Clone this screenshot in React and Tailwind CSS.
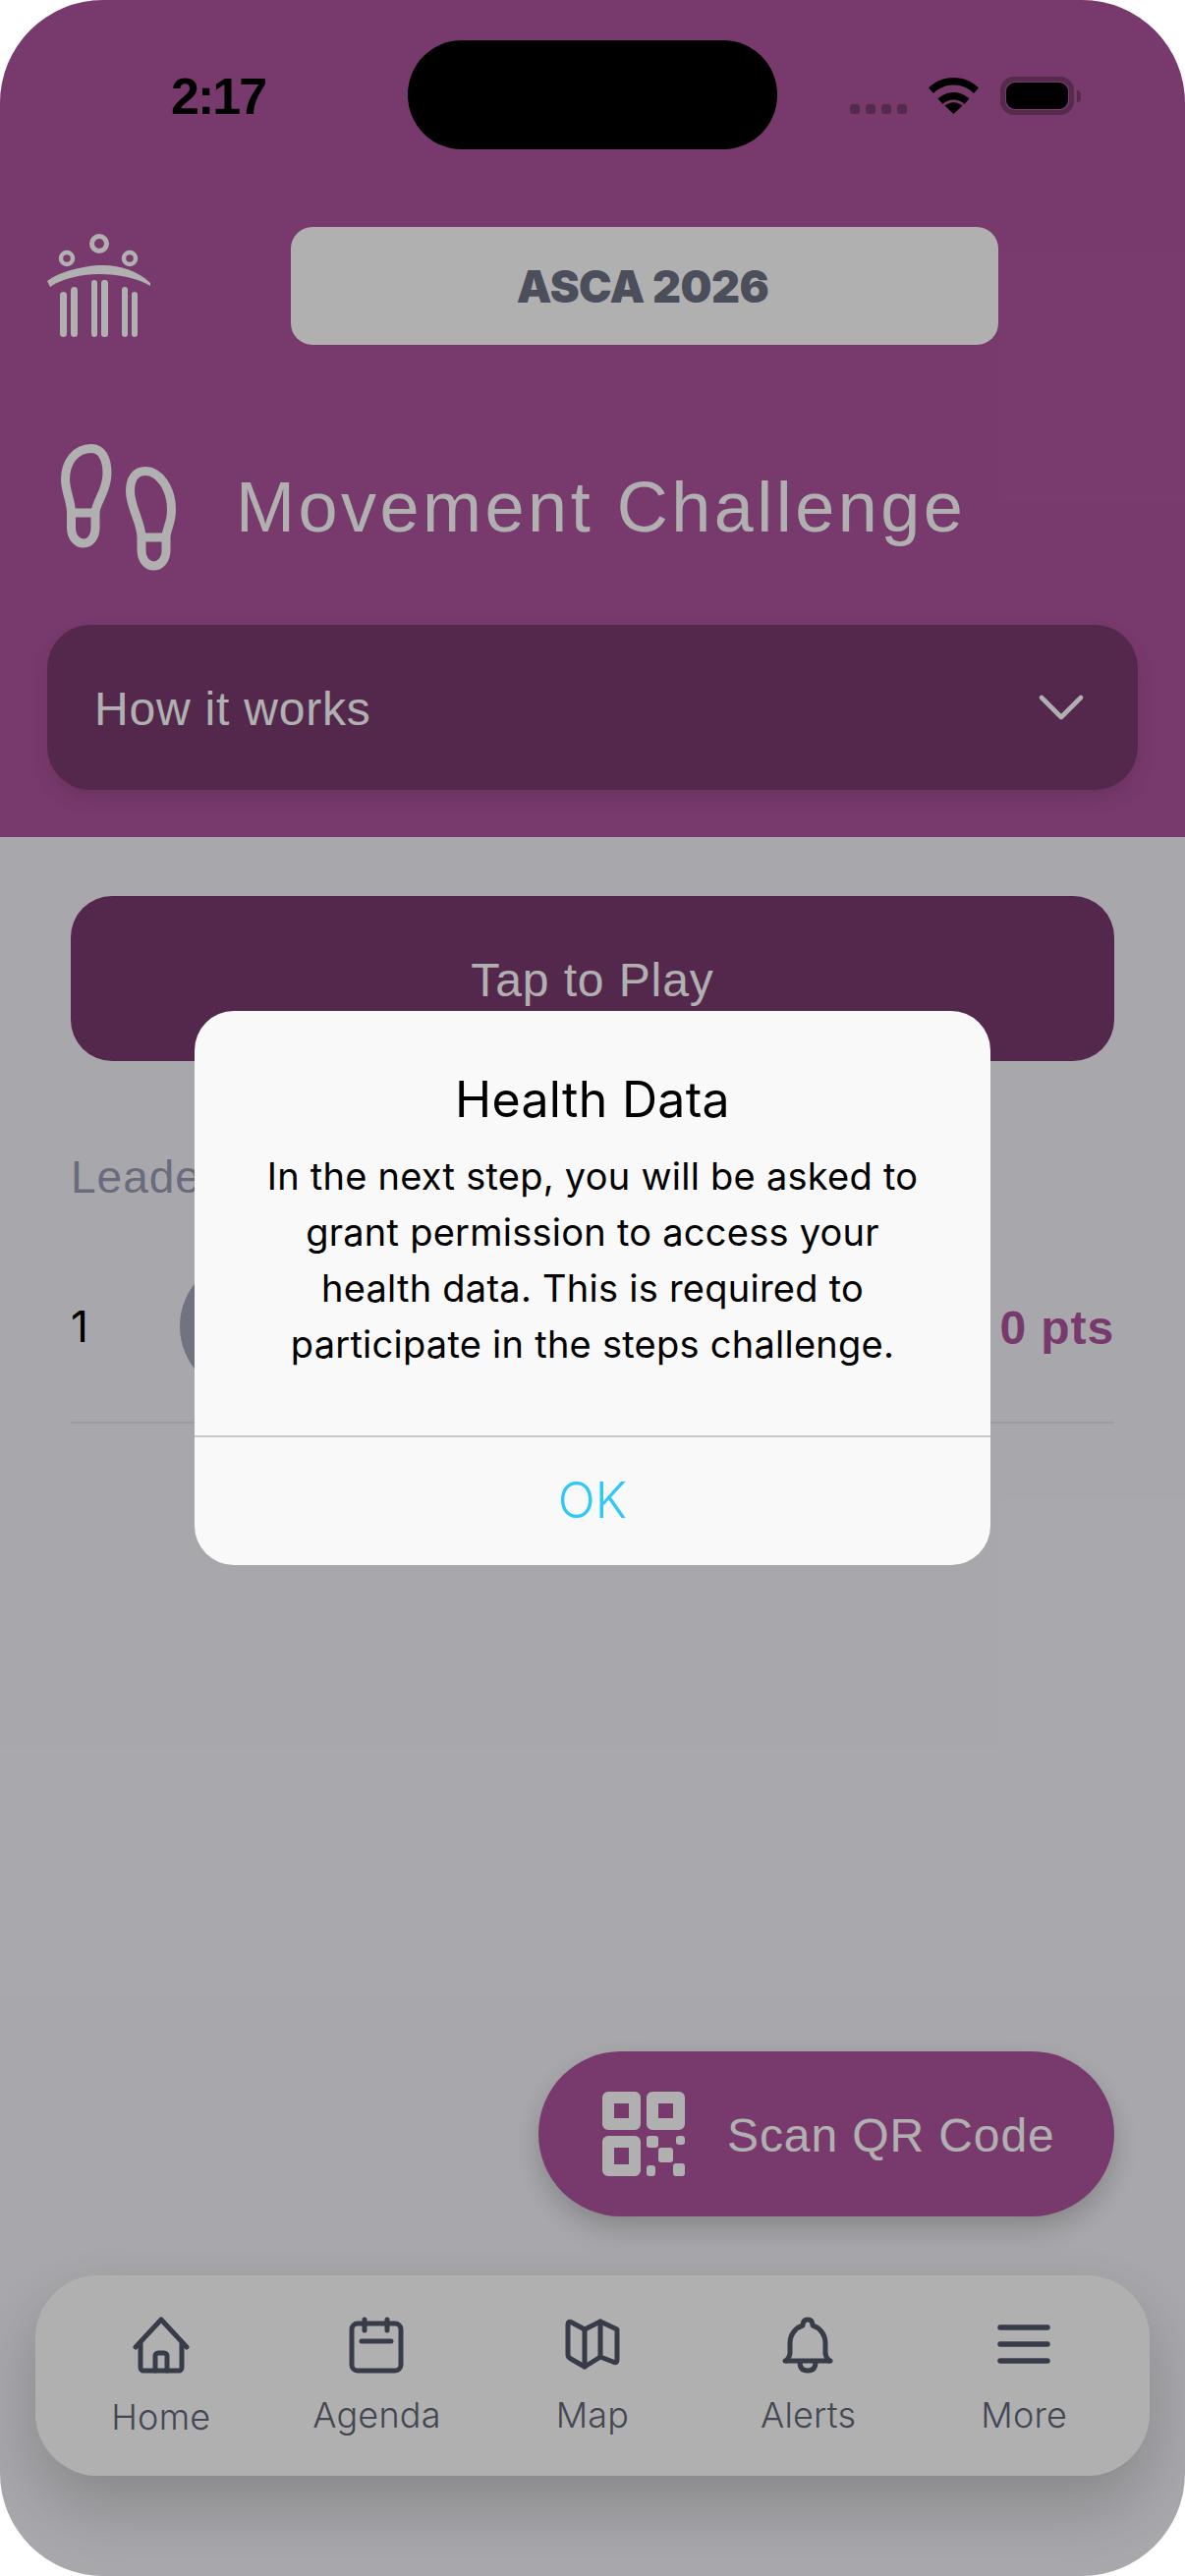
import React from 'react';
import { ChevronDown } from 'lucide-react';

const Footprints = () => (
  <svg width="118" height="130" viewBox="0 0 118 130" fill="none" stroke="currentColor" strokeWidth="9" className="shrink-0">
    <path d="M31 4.500C15 4.500 4.500 18 4.500 36c0 12 6 22 6 34v15c0 10 6 16 12.500 16s12-6 12-16V70c0-10 12-22 12-40C47 14 41 4.500 31 4.500Z" />
    <path d="M10 70h25" />
    <g transform="translate(66 23)">
      <path d="M20 4.500C10 4.500 4.500 12 4.500 25c0 16 11.500 32 11.500 47v13c0 10 6 16 12.500 16S41 95 41 85V72c0-8 5.500-14 5.500-28C46.500 22 34 4.500 20 4.500Z" />
      <path d="M16 72h25" />
    </g>
  </svg>
);

const Logo = () => (
  <svg width="106" height="106" viewBox="0 0 106 106" fill="currentColor" className="shrink-0">
    <circle cx="53" cy="10" r="7.5" fill="none" stroke="currentColor" strokeWidth="5" />
    <circle cx="20" cy="25" r="6" fill="none" stroke="currentColor" strokeWidth="4.500" />
    <circle cx="84" cy="25" r="6" fill="none" stroke="currentColor" strokeWidth="4.500" />
    <path d="M0 48C12 39 34 33 53 32c20-1 40 6 52 18v3C92 45 72 41 53 41 36 41 16 45 3 54Z" />
    <rect x="13" y="59" width="7" height="46" rx="3.500" />
    <rect x="24" y="54" width="7" height="51" rx="3.500" />
    <rect x="45" y="47" width="6" height="58" rx="3" />
    <rect x="55" y="47" width="7" height="58" rx="3" />
    <rect x="76" y="54" width="6" height="51" rx="3" />
    <rect x="86" y="59" width="6" height="46" rx="3" />
  </svg>
);

const QrIcon = () => (
  <svg width="84" height="86" viewBox="0 0 84 86" fill="currentColor" fillRule="evenodd" className="shrink-0">
    <path d="M6 0h27a6 6 0 0 1 6 6v27a6 6 0 0 1-6 6H6a6 6 0 0 1-6-6V6a6 6 0 0 1 6-6Zm6 12v15h15V12Z" />
    <path d="M51 0h27a6 6 0 0 1 6 6v27a6 6 0 0 1-6 6H51a6 6 0 0 1-6-6V6a6 6 0 0 1 6-6Zm6 12v15h15V12Z" />
    <path d="M6 45h27a6 6 0 0 1 6 6v29a6 6 0 0 1-6 6H6a6 6 0 0 1-6-6V51a6 6 0 0 1 6-6Zm6 12v17h15V57Z" />
    <rect x="45" y="45" width="12" height="12" rx="3" />
    <rect x="75" y="45" width="9" height="9" rx="3" />
    <rect x="57" y="57" width="15" height="15" rx="3" />
    <rect x="45" y="75" width="9" height="11" rx="3" />
    <rect x="72" y="73" width="12" height="13" rx="3" />
  </svg>
);

const HomeIcon = () => (
  <svg width="58" height="58" viewBox="0 0 58 58" fill="none" stroke="currentColor" strokeWidth="5" strokeLinecap="round" strokeLinejoin="round">
    <path d="M3 31 29 3l26 28" />
    <path d="M8 27v25a3 3 0 0 0 3 3h36a3 3 0 0 0 3-3V27" />
    <path d="M23 55V40a3 3 0 0 1 3-3h6a3 3 0 0 1 3 3v15" />
  </svg>
);

const CalendarIcon = () => (
  <svg width="56" height="58" viewBox="0 0 56 58" fill="none" stroke="currentColor" strokeWidth="5" strokeLinecap="round" strokeLinejoin="round">
    <rect x="3" y="7" width="50" height="48" rx="6" />
    <path d="M16 3v11M39 3v11M13 25h30" />
  </svg>
);

const MapIcon = () => (
  <svg width="56" height="52" viewBox="0 0 56 52" fill="none" stroke="currentColor" strokeWidth="5" strokeLinecap="round" strokeLinejoin="round" className="mt-[2px]">
    <path d="M3 6Q3 2 7 4l13 7 16-8 17 8v31q0 4-4 2l-13-5-16 10-14-8q-3-2-3-4Z" />
    <path d="M20 11v38M36 3v36" />
  </svg>
);

const BellIcon = () => (
  <svg width="52" height="58" viewBox="0 0 52 58" fill="none" stroke="currentColor" strokeWidth="5" strokeLinecap="round" strokeLinejoin="round" className="-ml-[2px]">
    <path d="M3 45h46" />
    <path d="M4 45c2-2 4-4 4-8V27c0-9 6-16 13-18 0-4 2-6 5-6s5 2 5 6c7 2 13 9 13 18v10c0 4 2 6 4 8" />
    <path d="M18 46c0 6 3 9 8 9s8-3 8-9" />
  </svg>
);

const MenuIcon = () => (
  <svg width="54" height="58" viewBox="0 0 54 58" fill="none" stroke="currentColor" strokeWidth="5.500" strokeLinecap="round">
    <path d="M3 11h48M3 28h48M3 45h48" />
  </svg>
);

const navItems = [
  { label: 'Home', icon: HomeIcon },
  { label: 'Agenda', icon: CalendarIcon },
  { label: 'Map', icon: MapIcon },
  { label: 'Alerts', icon: BellIcon },
  { label: 'More', icon: MenuIcon },
];

export default function App() {
  return (
    <div className="w-[1206px] h-[2622px] bg-white font-['Liberation_Sans',sans-serif]">
      <div className="relative w-full h-full rounded-[105px] overflow-hidden bg-[#f4f4fa] flex flex-col">
        {/* Purple header */}
        <header className="h-[852px] shrink-0 bg-[#af549e] text-white flex flex-col px-12">
          <div className="h-[231px] shrink-0" />
          <div className="flex items-center h-[120px]">
            <Logo />
            <div className="ml-[142px] w-[720px] h-[120px] rounded-[22px] bg-white flex items-center justify-center text-[#6d7285] text-[45px] tracking-[-0.6px] font-black font-['Inter',sans-serif] pt-[2px] pr-[4px]">
              ASCA 2026
            </div>
          </div>
          <div className="flex items-center mt-[101px] pl-[14px] gap-[60px]">
            <Footprints />
            <h1 className="text-[72px] leading-[80px] tracking-[3.5px] font-normal pb-[3px]">Movement Challenge</h1>
          </div>
          <div className="mt-[54px] h-[168px] w-[1110px] rounded-[44px] bg-[#7a3b6e] shadow-[0_10px_24px_rgba(0,0,0,0.12)] flex items-center justify-between pl-[48px] pr-[38px]">
            <span className="text-[48px] tracking-[0.8px] pt-[4px]">How it works</span>
            <ChevronDown size={80} strokeWidth={1.4} />
          </div>
        </header>

        {/* Challenge content */}
        <main className="flex-1 flex flex-col px-[72px] pt-[60px]">
          <button className="h-[168px] shrink-0 rounded-[42px] bg-[#7a3b6e] text-white text-[48px] tracking-[0.9px] pt-[4px]">Tap to Play</button>
          <h2 className="mt-[90px] text-[46px] leading-[56px] tracking-[1px] text-[#9a9db5] font-normal">Leaderboard</h2>
          <div className="mt-[54px] flex items-center h-[140px]">
            <span className="text-[44px] text-black font-['Inter',sans-serif] w-[111px]">1</span>
            <div className="w-[140px] h-[140px] rounded-full bg-[#a4a7ba]" />
            <span className="ml-auto text-[#af549e] text-[48px] tracking-[0.9px] font-bold pt-[3px]">0 pts</span>
          </div>
          <div className="mt-[27px] h-[2px] bg-[#e4e4ea]" />

          <div className="mt-auto flex justify-end">
            <button className="w-[586px] h-[168px] rounded-full bg-[#af549e] text-white flex items-center pl-[65px] gap-[43px] shadow-[0_12px_28px_rgba(0,0,0,0.2)]">
              <QrIcon />
              <span className="text-[48px] tracking-[0.9px] whitespace-nowrap pt-[3px]">Scan QR Code</span>
            </button>
          </div>
        </main>

        <div className="px-9 pt-[60px] pb-[102px]">
          <nav className="h-[204px] rounded-[64px] bg-white/95 grid grid-cols-5 px-[18px] pt-[42px] shadow-[0_30px_70px_rgba(0,0,0,0.2)] text-[#636877]">
            {navItems.map(({ label, icon: Icon }) => (
              <div key={label} className="flex flex-col items-center">
                <div className="h-[58px] flex items-start justify-center text-[#51576a]"><Icon /></div>
                <span className={`${label === 'Home' ? 'mt-[22px]' : 'mt-[20px]'} text-[36px] leading-[44px] tracking-[0.2px] font-['Inter',sans-serif] font-light`}>{label}</span>
              </div>
            ))}
          </nav>
        </div>

        {/* Dim layer from the system alert */}
        <div className="absolute inset-0 bg-black/[0.31]" />

        {/* Status bar */}
        <span className="absolute left-[174px] top-[68px] text-[52px] leading-[60px] tracking-[-2px] font-bold text-black">2:17</span>
        <div className="absolute left-[415px] top-[41px] w-[376px] h-[111px] rounded-[55px] bg-black" />
        <div className="absolute left-[865px] top-[106px] flex gap-[6px]">
          {[0, 1, 2, 3].map((i) => <div key={i} className="w-[10px] h-[10px] rounded-[3px] bg-[#552a4d]" />)}
        </div>
        <svg className="absolute left-[945px] top-[79px]" width="51" height="37" viewBox="0 0 51 37" fill="#000">
          <path d="M25.500 0C15.500 0 7 3.500 0 10.500l5 5.500C10.500 10.500 17.500 7.500 25.500 7.500S40.500 10.500 46 16l5-5.500C44 3.500 35.500 0 25.500 0Z" />
          <path d="M25.500 15c-6 0-11.500 2.500-16 6.500l5 5.500c3-3 6.500-4.500 11-4.500s8 1.500 11 4.500l5-5.500c-4.500-4-10-6.500-16-6.500Z" />
          <path d="M25.500 37l-9-8.500c2.500-2 5.500-3.300 9-3.300s6.500 1.300 9 3.300Z" />
        </svg>
        <div className="absolute left-[1018px] top-[78px] w-[75px] h-[39px] rounded-[14px] border-[5px] border-[#552a4d] p-[1px]">
          <div className="w-full h-full rounded-[9px] bg-black" />
        </div>
        <div className="absolute left-[1096px] top-[92px] w-[4px] h-[12px] rounded-r-[4px] bg-[#552a4d]" />

        {/* Alert */}
        <div className="absolute left-[198px] top-[1029px] w-[810px] h-[564px] rounded-[40px] bg-[#f9f9f9] flex flex-col font-['Inter',sans-serif] text-center">
          <div className="h-[432px] pt-[60px] shrink-0">
            <h3 className="text-[50px] leading-[60px] tracking-[0.3px] text-black font-normal">Health Data</h3>
            <p className="mt-[20px] text-[38px] leading-[57px] tracking-[0.25px] text-black">In the next step, you will be asked to<br />grant permission to access your<br />health data. This is required to<br />participate in the steps challenge.</p>
          </div>
          <div className="h-[2px] bg-[#c9c9c9]" />
          <div className="flex-1 flex items-center justify-center text-[50px] text-[#2ec9f6] font-light pb-[2px]">OK</div>
        </div>
      </div>
    </div>
  );
}
